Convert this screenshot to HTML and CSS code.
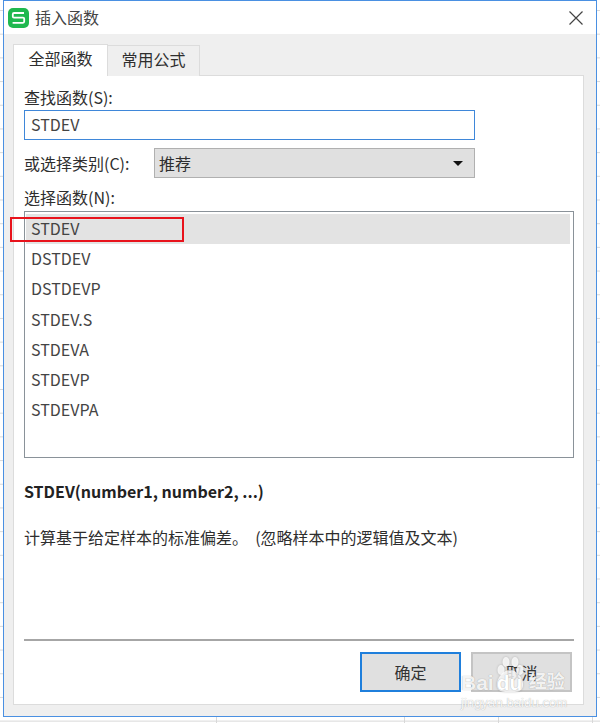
FILE: index.html
```html
<!DOCTYPE html>
<html lang="zh-CN">
<head>
  <meta charset="UTF-8">
  <title>插入函数</title>
  <link rel="stylesheet" href="styles.css">
</head>
<body>
  <div class="dialog">
    <div class="titlebar">
      <svg class="app-logo" width="22" height="21" viewBox="0 0 22 21">
        <rect x="0" y="0" width="21" height="20" rx="5" fill="#1fb84f"/>
        <path d="M16 5H6Q4.8 5 4.8 6.2V8.4Q4.8 9.6 6 9.6H15Q16.2 9.6 16.2 10.8V13.6Q16.2 14.8 15 14.8H4.6" fill="none" stroke="#fff" stroke-width="1.8"/>
      </svg>
      <span class="title">插入函数</span>
      <svg class="close" width="14" height="14" viewBox="0 0 14 14">
        <path d="M0.5 0.5L13.5 13.5M13.5 0.5L0.5 13.5" stroke="#444" stroke-width="1.2" fill="none"/>
      </svg>
    </div>

    <div class="body">
      <div class="tabs">
        <div class="tab active">全部函数</div>
        <div class="tab">常用公式</div>
      </div>
      <div class="panel">
        <label class="field-label">查找函数(S):</label>
        <div class="search">STDEV</div>

        <div class="category">
          <label class="category-label">或选择类别(C):</label>
          <div class="select">
            <span>推荐</span>
            <span class="caret"></span>
          </div>
        </div>

        <label class="field-label list-label">选择函数(N):</label>
        <ul class="func-list">
          <li class="selected">STDEV</li>
          <li>DSTDEV</li>
          <li>DSTDEVP</li>
          <li>STDEV.S</li>
          <li>STDEVA</li>
          <li>STDEVP</li>
          <li>STDEVPA</li>
        </ul>

        <p class="signature">STDEV(number1, number2, ...)</p>
        <p class="desc">计算基于给定样本的标准偏差。  (忽略样本中的逻辑值及文本)</p>

        <div class="footer">
          <button class="btn primary">确定</button>
          <button class="btn">取消</button>
        </div>
      </div>
    </div>

    <div class="red-box"></div>
  </div>

  <div class="watermark">
    <div class="wm-brand">
      <span>Bai</span>
      <span class="wm-du">
        <svg class="paw" width="30" height="37" viewBox="0 0 30 37">
          <g fill="#fff" fill-opacity="0.8">
            <ellipse cx="6" cy="13" rx="3.5" ry="5"/>
            <ellipse cx="11" cy="5" rx="3.5" ry="5"/>
            <ellipse cx="20" cy="5" rx="3.5" ry="5"/>
            <ellipse cx="25" cy="13" rx="3.5" ry="5"/>
            <path d="M15 13C8 13 1 22 2 29C3 36 11 35 15 35C19 35 27 36 28 29C29 22 22 13 15 13Z"/>
          </g>
        </svg>
        <span class="wm-du-text">du</span>
      </span>
      <span class="wm-cn">经验</span>
    </div>
    <span class="wm-url">jingyan.baidu.com</span>
  </div>
</body>
</html>
```

FILE: styles.css
```css
* {
  box-sizing: border-box;
}

html, body {
  height: 100%;
}

body {
  margin: 0;
  padding: 0 3px 6px;
  position: relative;
  overflow: hidden;
  font-family: "Noto Sans CJK SC", "Noto Sans", sans-serif;
  font-size: 16px;
  color: #2e2e2e;
  background-color: #fff;
  background-image:
    linear-gradient(#d8d8d8 1px, transparent 1px),
    linear-gradient(90deg, #d8d8d8 1px, transparent 1px);
  background-size: 94px 23.7px;
  background-position: 28px 10px;
}

.dialog {
  position: relative;
  height: 717px;
  width: 594px;
  border: 1px solid #4a90e2;
  background: #efefef;
  display: flex;
  flex-direction: column;
}

.titlebar {
  height: 33px;
  flex: none;
  background: #fff;
  display: flex;
  align-items: center;
  padding: 0 13px 0 4px;
}

.app-logo {
  flex: none;
  margin-top: 1px;
}

.title {
  margin-left: 5px;
  color: #444;
  line-height: 20px;
  margin-top: -2px;
}

.close {
  margin-left: auto;
}

.body {
  flex: 1;
  padding: 10px 12px 11px 9px;
  display: flex;
  flex-direction: column;
}

.tabs {
  display: flex;
  align-items: flex-end;
  height: 32px;
  flex: none;
  margin-bottom: -1px;
  position: relative;
}

.tab {
  width: 92px;
  height: 31px;
  border: 1px solid #dcdcdc;
  border-bottom: none;
  border-left: none;
  background: #efefef;
  text-align: center;
  line-height: 27px;
}

.tab.active {
  width: 95px;
  height: 32px;
  border-left: 1px solid #dcdcdc;
  background: #fff;
}

.panel {
  flex: 1;
  background: #fff;
  border: 1px solid #dcdcdc;
  padding: 11px 9px 0 10px;
  display: flex;
  flex-direction: column;
}

.field-label {
  height: 23px;
  line-height: 20px;
  display: block;
}

.search {
  width: 451px;
  height: 30px;
  border: 1px solid #3f87d9;
  padding-left: 6px;
  line-height: 27px;
  color: #444;
}

.category {
  display: flex;
  align-items: center;
  margin-top: 8px;
  width: 451px;
}

.category-label {
  width: 130px;
}

.select {
  flex: 1;
  height: 30px;
  background: #e0e0e0;
  border: 1px solid #b0b0b0;
  padding: 0 11px 0 4px;
  display: flex;
  align-items: center;
  justify-content: space-between;
}

.caret {
  width: 0;
  height: 0;
  border-left: 5px solid transparent;
  border-right: 5px solid transparent;
  border-top: 5px solid #111;
}

.list-label {
  margin-top: 9px;
  height: 24px;
}

.func-list {
  list-style: none;
  margin: 0;
  padding: 2px 3px 0 1px;
  width: 550px;
  height: 247px;
  border: 1px solid #8a9299;
  color: #444;
}

.func-list li {
  height: 30.2px;
  line-height: 29px;
  padding-left: 5px;
}

.func-list li.selected {
  background: #e3e3e3;
}

.signature {
  margin: 23px 0 0;
  font-weight: 700;
  color: #222;
  line-height: 20px;
}

.desc {
  margin: 26px 0 0;
  line-height: 20px;
  white-space: pre;
}

.footer {
  margin-top: auto;
  margin-bottom: 11px;
  width: 550px;
  height: 54px;
  border-top: 2px solid #a6a6a6;
  padding: 11px 2px 0 0;
  display: flex;
  justify-content: flex-end;
  gap: 10px;
}

.btn {
  width: 101px;
  height: 40px;
  background: #e0e0e0;
  border: 2px solid #c4c4c4;
  font-family: inherit;
  font-size: 16px;
  color: #333;
  padding: 0;
}

.btn.primary {
  border-color: #1f7fdc;
}

.red-box {
  position: absolute;
  left: 6px;
  top: 216px;
  width: 174px;
  height: 25px;
  border: 2px solid #e8131c;
}

.watermark {
  position: absolute;
  left: 461px;
  top: 670px;
  display: flex;
  flex-direction: column;
  color: rgba(255, 255, 255, 0.9);
  text-shadow: 0 0 1px rgba(0, 0, 0, 0.35);
  font-family: "Liberation Sans", "Noto Sans CJK SC", sans-serif;
  line-height: 1;
}

.wm-brand {
  font-size: 21px;
  font-weight: 700;
  display: flex;
  align-items: center;
  height: 24px;
}

.wm-du {
  position: relative;
  width: 33px;
  padding-left: 3px;
}

.paw {
  position: absolute;
  left: 1px;
  top: -15px;
  filter: drop-shadow(0 0 1px rgba(0, 0, 0, 0.25));
}

.wm-du-text {
  position: relative;
  color: #fff;
}

.wm-cn {
  font-size: 18px;
  margin-left: 2px;
}

.wm-url {
  font-size: 13.2px;
  margin-top: 2px;
}
```
